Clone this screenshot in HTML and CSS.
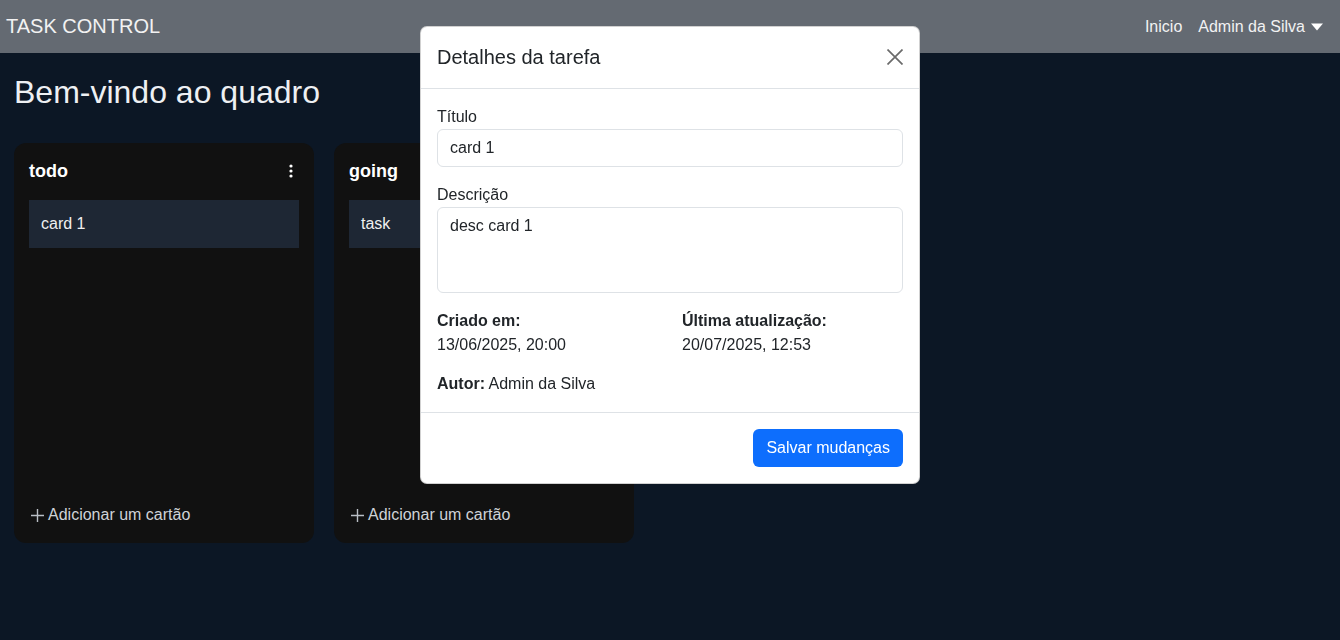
FILE: index.html
```html
<!DOCTYPE html>
<html lang="pt-BR">
<head>
<meta charset="utf-8">
<title>Task Control</title>
<link rel="stylesheet" href="styles.css">
</head>
<body>
<nav class="navbar">
  <span class="brand">TASK CONTROL</span>
  <div class="nav-right">
    <span class="nav-link">Inicio</span>
    <span class="nav-link">Admin da Silva <svg class="caret" width="12" height="8" viewBox="0 0 12 8"><path d="M0 0.5h12L6 7.5z" fill="#fff"/></svg></span>
  </div>
</nav>
<main class="page">
  <h1 class="title">Bem-vindo ao quadro</h1>
  <div class="board">
    <section class="column">
      <div class="col-head">
        <span class="col-title">todo</span>
        <svg class="dots" width="4" height="14" viewBox="0 0 4 14"><circle cx="2" cy="2" r="1.6" fill="#fff"/><circle cx="2" cy="7" r="1.6" fill="#fff"/><circle cx="2" cy="12" r="1.6" fill="#fff"/></svg>
      </div>
      <div class="card">card 1</div>
      <div class="add"><svg class="plus" width="13" height="13" viewBox="0 0 13 13"><path d="M6.5 0v13M0 6.5h13" stroke="#b9bec5" stroke-width="1.4"/></svg>Adicionar um cartão</div>
    </section>
    <section class="column">
      <div class="col-head">
        <span class="col-title">going</span>
      </div>
      <div class="card">task</div>
      <div class="add"><svg class="plus" width="13" height="13" viewBox="0 0 13 13"><path d="M6.5 0v13M0 6.5h13" stroke="#b9bec5" stroke-width="1.4"/></svg>Adicionar um cartão</div>
    </section>
  </div>
</main>

<div class="modal">
  <div class="modal-header">
    <span class="modal-title">Detalhes da tarefa</span>
    <svg class="close" width="16" height="16" viewBox="0 0 16 16"><path d="M0.5 0.5L15.5 15.5M15.5 0.5L0.5 15.5" stroke="#6b6b6b" stroke-width="1.7"/></svg>
  </div>
  <div class="modal-body">
    <div class="field">
      <label class="label">Título</label>
      <div class="input">card 1</div>
    </div>
    <div class="field">
      <label class="label">Descrição</label>
      <div class="input textarea">desc card 1</div>
    </div>
    <div class="meta">
      <div><div class="strong">Criado em:</div><div>13/06/2025, 20:00</div></div>
      <div><div class="strong">Última atualização:</div><div>20/07/2025, 12:53</div></div>
    </div>
    <p class="author"><span class="strong">Autor:</span> Admin da Silva</p>
  </div>
  <div class="modal-footer">
    <button class="btn">Salvar mudanças</button>
  </div>
</div>
</body>
</html>
```
FILE: styles.css
```css
* { box-sizing: border-box; }
html, body { margin: 0; padding: 0; }
body {
  background: #0c1725;
  font-family: "Liberation Sans", Arial, sans-serif;
  color: #fff;
  height: 640px;
  overflow: hidden;
}
.navbar {
  height: 53px;
  background: #646a72;
  display: flex;
  align-items: center;
  justify-content: space-between;
  padding: 0 17px 0 6px;
}
.brand { font-size: 20px; color: #f2f2f2; }
.nav-right { display: flex; gap: 16px; font-size: 16px; color: #f2f2f2; }
.nav-link { display: flex; align-items: center; gap: 6px; }
.caret { margin-top: 1px; }
.page { padding: 0 14px; }
.title {
  font-size: 32px;
  font-weight: 400;
  margin: 0;
  padding: 20px 0 32px;
  line-height: 38px;
  color: #eef0f3;
}
.board { display: flex; gap: 20px; }
.column {
  width: 300px;
  height: 400px;
  background: #111111;
  border-radius: 12px;
  padding: 15px;
  display: flex;
  flex-direction: column;
}
.col-head {
  display: flex;
  justify-content: space-between;
  align-items: center;
  height: 24px;
  margin-top: 1px;
  margin-bottom: 17px;
  padding-right: 6px;
}
.col-title { font-size: 18px; font-weight: 700; color: #fff; }
.card {
  background: #1e2734;
  height: 48px;
  display: flex;
  align-items: center;
  padding: 0 12px;
  font-size: 16px;
  color: #f0f0f0;
}
.add {
  margin-top: auto;
  font-size: 16px;
  color: #cfd3d8;
  padding: 0 2px 4px;
  display: flex;
  align-items: center;
  gap: 4px;
}
.modal {
  position: fixed;
  top: 26px;
  left: 420px;
  width: 500px;
  background: #fff;
  border: 1px solid rgba(0,0,0,0.18);
  border-radius: 7px;
  color: #212529;
}
.modal-header {
  display: flex;
  align-items: center;
  justify-content: space-between;
  padding: 15px 16px 16px;
  border-bottom: 1px solid #dee2e6;
}
.modal-title { font-size: 20px; line-height: 30px; color: #212529; }
.close { margin-right: 0; }
.modal-body { padding: 16px; font-size: 16px; line-height: 24px; }
.field { margin-bottom: 16px; }
.label { display: block; margin-bottom: 0; line-height: 24px; }
.input {
  border: 1px solid #dee2e6;
  border-radius: 6px;
  padding: 6px 12px;
  height: 38px;
  line-height: 24px;
}
.textarea { height: 86px; }
.meta { display: grid; grid-template-columns: 1fr 1fr; gap: 24px; margin-bottom: 15px; }
.strong { font-weight: 700; }
.author { margin: 0; }
.modal-footer {
  border-top: 1px solid #dee2e6;
  padding: 16px;
  display: flex;
  justify-content: flex-end;
}
.btn {
  background: #0d6efd;
  color: #fff;
  border: none;
  border-radius: 6px;
  height: 38px;
  padding: 0 13px;
  font-family: "Liberation Sans", Arial, sans-serif;
  font-size: 16px;
}
```
